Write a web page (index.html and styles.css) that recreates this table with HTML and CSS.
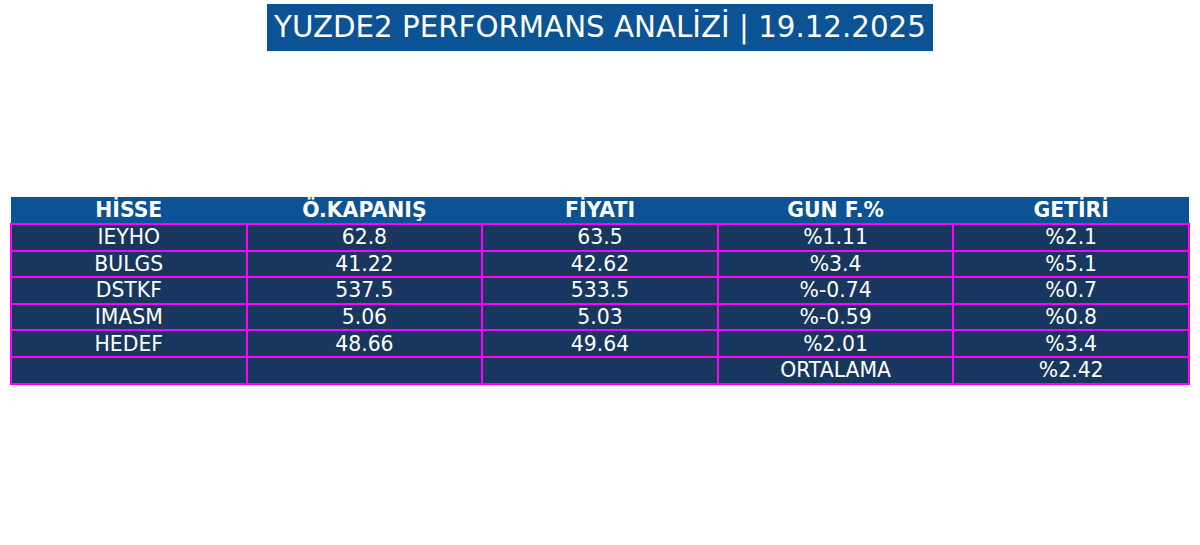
FILE: index.html
```html
<!DOCTYPE html>
<html lang="tr">
<head>
<meta charset="utf-8">
<title>YUZDE2 PERFORMANS ANALİZİ</title>
<link rel="stylesheet" href="styles.css">
</head>
<body>
<div class="page">
  <div class="title-wrap">
    <h1 class="title">YUZDE2 PERFORMANS ANALİZİ | 19.12.2025</h1>
  </div>
  <table class="perf">
    <thead>
      <tr><th>HİSSE</th><th>Ö.KAPANIŞ</th><th>FİYATI</th><th>GUN F.%</th><th>GETİRİ</th></tr>
    </thead>
    <tbody>
      <tr><td>IEYHO</td><td>62.8</td><td>63.5</td><td>%1.11</td><td>%2.1</td></tr>
      <tr><td>BULGS</td><td>41.22</td><td>42.62</td><td>%3.4</td><td>%5.1</td></tr>
      <tr><td>DSTKF</td><td>537.5</td><td>533.5</td><td>%-0.74</td><td>%0.7</td></tr>
      <tr><td>IMASM</td><td>5.06</td><td>5.03</td><td>%-0.59</td><td>%0.8</td></tr>
      <tr><td>HEDEF</td><td>48.66</td><td>49.64</td><td>%2.01</td><td>%3.4</td></tr>
      <tr><td></td><td></td><td></td><td>ORTALAMA</td><td>%2.42</td></tr>
    </tbody>
  </table>
</div>
</body>
</html>
```
FILE: styles.css
```css
html, body {
  margin: 0;
  padding: 0;
  background: #ffffff;
}
body {
  font-family: "DejaVu Sans", "Liberation Sans", sans-serif;
}
.page {
  width: 1200px;
  height: 545px;
  display: flex;
  flex-direction: column;
  align-items: center;
}
.title-wrap {
  margin-top: 4px;
  display: flex;
  justify-content: center;
}
.title {
  margin: 0;
  height: 47px;
  box-sizing: border-box;
  padding: 0 7px;
  background: #0b5394;
  color: #ffffff;
  font-weight: normal;
  font-size: 29.3px;
  line-height: 47px;
  white-space: nowrap;
}
.perf {
  margin-top: 146px;
  width: 1180px;
  border-collapse: collapse;
  table-layout: fixed;
  font-size: 20.4px;
  color: #ffffff;
}
.perf th {
  background: #0b5394;
  font-weight: bold;
  height: 26px;
  padding: 0;
  text-align: center;
  line-height: 26px;
}
.perf td {
  background: #17375e;
  border: 2px solid #ff00ff;
  height: 24.6px;
  padding: 0;
  text-align: center;
  line-height: 22px;
}
```
